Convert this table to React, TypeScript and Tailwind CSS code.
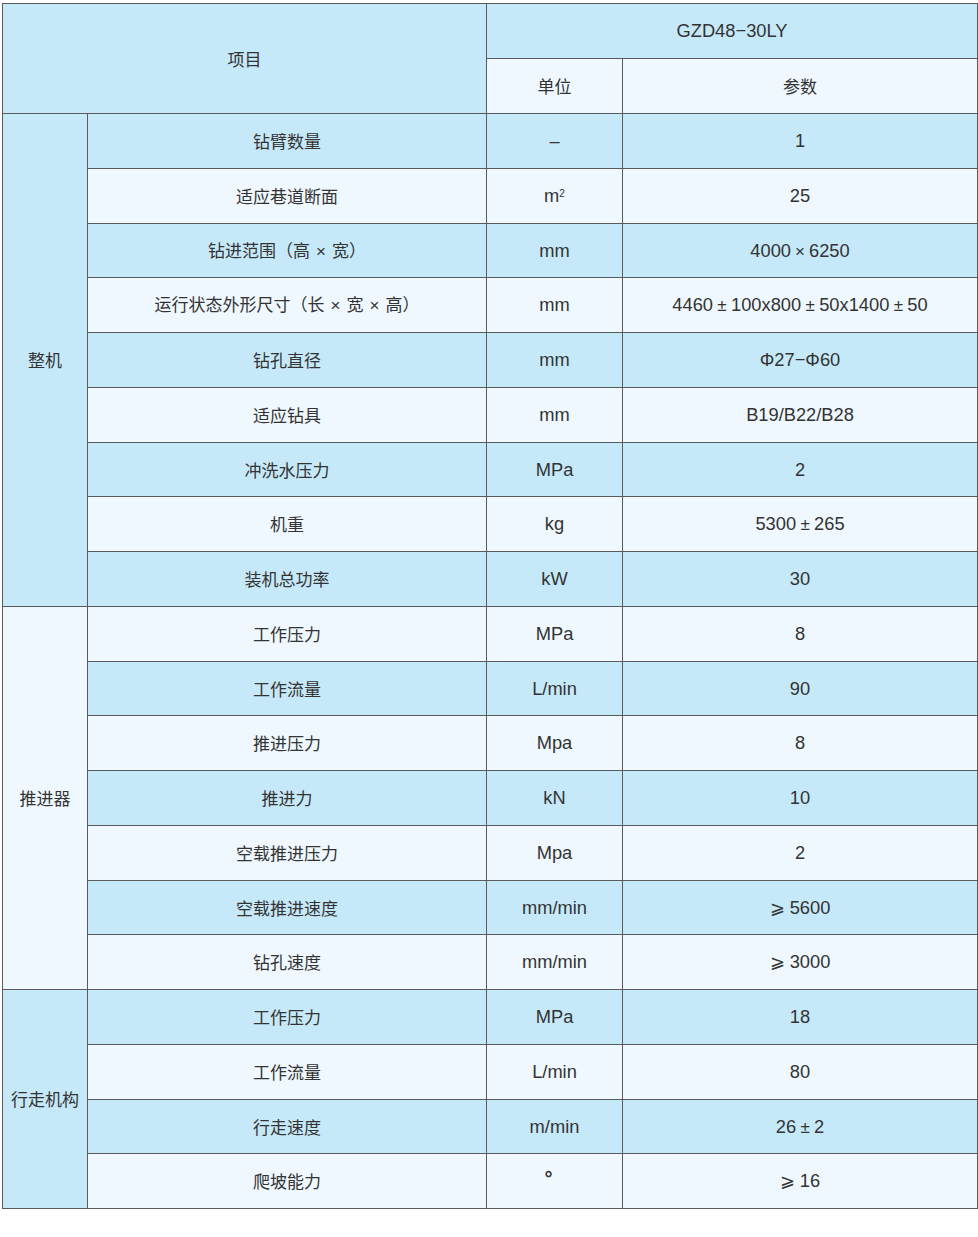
const BLUE = 'bg-[#c6e9f9]'
const WHITE = 'bg-[#eff8fe]'

const cjk = { fontFamily: '"Noto Sans CJK SC", sans-serif' }
const latin = { fontFamily: '"Liberation Sans", Arial, sans-serif' }

// ± and × sit in a wide slot with a small glyph, as in the source table
function Sym({ c, wide }: { c: string; wide?: boolean }) {
    return (
        <span className={`inline-block text-center text-[17px] ${wide ? 'w-[22px]' : 'w-[18px]'}`} style={latin}>
            {c}
        </span>
    )
}

function withSymbols(text: string, wide?: boolean) {
    return text.split(/([±×])/).map((part, i) =>
        part === '±' || part === '×' ? <Sym key={i} c={part} wide={wide} /> : part
    )
}

interface SpecRow {
    name: string
    unit: React.ReactNode
    value: string
}

interface SpecGroup {
    label: string
    rows: SpecRow[]
}

const groups: SpecGroup[] = [
    {
        label: '整机',
        rows: [
            { name: '钻臂数量', unit: '–', value: '1' },
            { name: '适应巷道断面', unit: <>m<sup className="text-[10px]">2</sup></>, value: '25' },
            { name: '钻进范围（高×宽）', unit: 'mm', value: '4000×6250' },
            { name: '运行状态外形尺寸（长×宽×高）', unit: 'mm', value: '4460±100x800±50x1400±50' },
            { name: '钻孔直径', unit: 'mm', value: 'Φ27−Φ60' },
            { name: '适应钻具', unit: 'mm', value: 'B19/B22/B28' },
            { name: '冲洗水压力', unit: 'MPa', value: '2' },
            { name: '机重', unit: 'kg', value: '5300±265' },
            { name: '装机总功率', unit: 'kW', value: '30' },
        ],
    },
    {
        label: '推进器',
        rows: [
            { name: '工作压力', unit: 'MPa', value: '8' },
            { name: '工作流量', unit: 'L/min', value: '90' },
            { name: '推进压力', unit: 'Mpa', value: '8' },
            { name: '推进力', unit: 'kN', value: '10' },
            { name: '空载推进压力', unit: 'Mpa', value: '2' },
            { name: '空载推进速度', unit: 'mm/min', value: '⩾ 5600' },
            { name: '钻孔速度', unit: 'mm/min', value: '⩾ 3000' },
        ],
    },
    {
        label: '行走机构',
        rows: [
            { name: '工作压力', unit: 'MPa', value: '18' },
            { name: '工作流量', unit: 'L/min', value: '80' },
            { name: '行走速度', unit: 'm/min', value: '26±2' },
            { name: '爬坡能力', unit: <span className="relative -left-[6px] -top-[3px] text-[20px] font-bold">°</span>, value: '⩾ 16' },
        ],
    },
]

const cell = 'border border-[#5b5b5b] text-center align-middle p-0'
const zh = 'text-[17px]'

export default function App() {
    let index = 0

    return (
        <div className="bg-white w-[978px] h-[1237px] pt-[3px] pl-[2px]">
            <table
                className="border-collapse table-fixed w-[975px] text-[18.3px] text-[#333]"
                style={{ fontFamily: '"Liberation Sans", Arial, "Noto Sans CJK SC", sans-serif' }}
            >
                <colgroup>
                    <col className="w-[85px]" />
                    <col className="w-[399px]" />
                    <col className="w-[136px]" />
                    <col className="w-[355px]" />
                </colgroup>
                <tbody>
                    <tr className="h-[55px]">
                        <td colSpan={2} rowSpan={2} className={`${cell} ${zh} ${BLUE}`} style={cjk}>项目</td>
                        <td colSpan={2} className={`${cell} ${BLUE}`}>GZD48−30LY</td>
                    </tr>
                    <tr className="h-[55px]">
                        <td className={`${cell} ${zh} ${WHITE}`} style={cjk}>单位</td>
                        <td className={`${cell} ${zh} ${WHITE}`} style={cjk}>参数</td>
                    </tr>
                    {groups.map((group, g) =>
                        group.rows.map((row, i) => {
                            const bg = index++ % 2 === 0 ? BLUE : WHITE
                            return (
                                <tr key={`${g}-${i}`} className="h-[54.75px]">
                                    {i === 0 && (
                                        <td
                                            rowSpan={group.rows.length}
                                            className={`${cell} ${zh} ${g % 2 === 0 ? BLUE : WHITE}`}
                                            style={cjk}
                                        >
                                            {group.label}
                                        </td>
                                    )}
                                    <td className={`${cell} ${zh} ${bg}`} style={cjk}>{withSymbols(row.name, true)}</td>
                                    <td className={`${cell} ${bg}`}>{row.unit}</td>
                                    <td className={`${cell} ${bg}`}>{withSymbols(row.value)}</td>
                                </tr>
                            )
                        })
                    )}
                </tbody>
            </table>
        </div>
    )
}
